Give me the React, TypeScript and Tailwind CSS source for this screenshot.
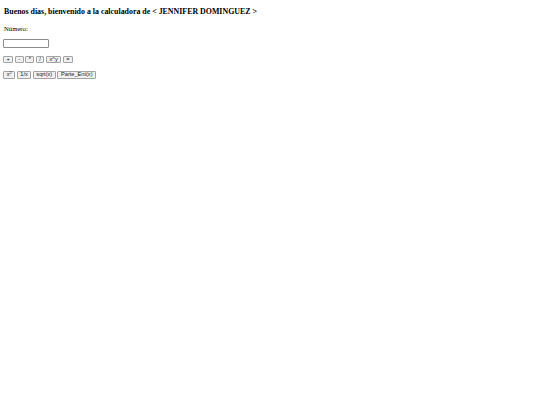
import React from 'react';

const Btn: React.FC<{ children: React.ReactNode; className?: string }> = ({ children, className = '' }) => (
  <button
    className={`h-[7px] px-0 border-[0.5px] border-[#a3a3a3] rounded-[1px] bg-[#f0f0f0] text-[5.6px] leading-none text-[#222] font-['Liberation_Sans',sans-serif] flex items-center justify-center whitespace-nowrap ${className}`}
  >
    {children}
  </button>
);

const App: React.FC = () => {
  return (
    <div className="bg-white min-h-[405px] px-[3px] pt-[8px] font-['Liberation_Serif',serif] text-black">
      <h3 className="pl-[1px] text-[7.9px] leading-[8px] font-bold">
        Buenos días, bienvenido a la calculadora de &lt; JENNIFER DOMINGUEZ &gt;
      </h3>
      <p className="pl-[1px] mt-[9px] text-[6.7px] leading-[8px]">Número:</p>
      <input
        type="text"
        className="mt-[6px] block w-[46px] h-[8.5px] border-[0.5px] border-[#8c8c8c] rounded-[1px] bg-white"
      />
      <div className="mt-[8.5px] flex gap-[1.7px]">
        <Btn className="w-[10.2px]">+</Btn>
        <Btn className="w-[8.7px]">-</Btn>
        <Btn className="w-[9px]">*</Btn>
        <Btn className="w-[8.4px]">/</Btn>
        <Btn className="w-[15.2px]">x^y</Btn>
        <Btn className="w-[10.2px]">=</Btn>
      </div>
      <div className="mt-[8px] flex gap-[1.7px]">
        <Btn className="w-[12.3px] h-[8px]">
          x<sup className="text-[4px]">2</sup>
        </Btn>
        <Btn className="w-[14.1px] h-[8px]">1/x</Btn>
        <Btn className="w-[23px] h-[8px]">sqrt(x)</Btn>
        <Btn className="w-[38.7px] h-[8px]">Parte_Ent(x)</Btn>
      </div>
    </div>
  );
};

export default App;
